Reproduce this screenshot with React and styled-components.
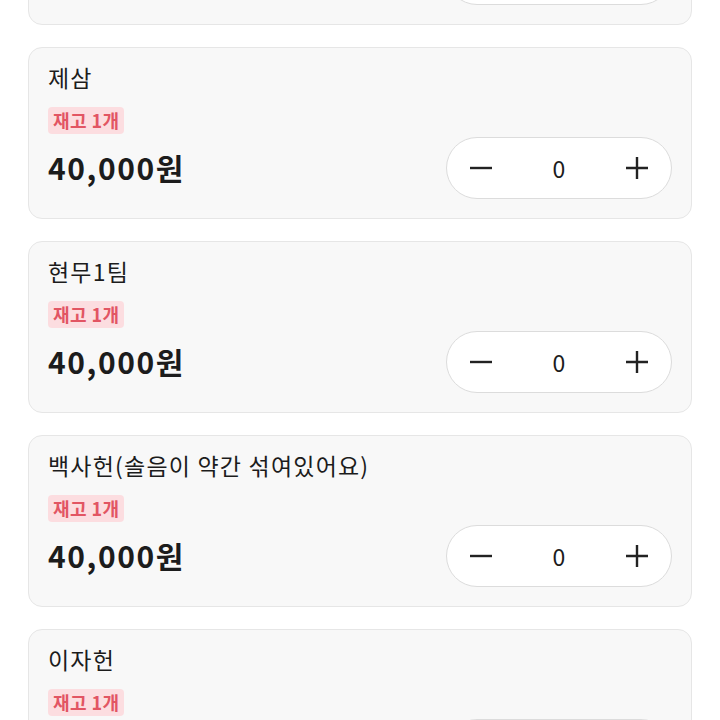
import React, { useState } from 'react';
import styled, { createGlobalStyle } from 'styled-components';

const GlobalStyle = createGlobalStyle`
  body {
    margin: 0;
    background: #ffffff;
    font-family: "Noto Sans CJK KR", "Noto Sans", sans-serif;
    color: #1f1f1f;
  }
`;

const items = [
  { name: '이름', stock: 1, price: 40000 },
  { name: '제삼', stock: 1, price: 40000 },
  { name: '현무1팀', stock: 1, price: 40000 },
  { name: '백사헌(솔음이 약간 섞여있어요)', stock: 1, price: 40000 },
  { name: '이자헌', stock: 1, price: 40000 },
];

function Stepper() {
  const [count, setCount] = useState(0);
  return (
    <StepperBox>
      <StepButton onClick={() => setCount(Math.max(0, count - 1))} aria-label="minus">
        <svg width="24" height="24" viewBox="0 0 24 24">
          <path d="M1 12h22" stroke="#222" strokeWidth="2.4" />
        </svg>
      </StepButton>
      <Count>{count}</Count>
      <StepButton onClick={() => setCount(count + 1)} aria-label="plus">
        <svg width="24" height="24" viewBox="0 0 24 24">
          <path d="M1 12h22M12 1v22" stroke="#222" strokeWidth="2.4" />
        </svg>
      </StepButton>
    </StepperBox>
  );
}

function ItemCard({ item }) {
  return (
    <Card>
      <Info>
        <Name>{item.name}</Name>
        <Badge>재고 {item.stock}개</Badge>
        <Price>{item.price.toLocaleString('ko-KR')}원</Price>
      </Info>
      <Stepper />
    </Card>
  );
}

export default function App() {
  return (
    <>
      <GlobalStyle />
      <Viewport>
        <List>
          {items.map((item, i) => (
            <ItemCard key={i} item={item} />
          ))}
        </List>
      </Viewport>
    </>
  );
}

const Viewport = styled.div`
  height: 720px;
  overflow: hidden;
`;

const List = styled.div`
  display: flex;
  flex-direction: column;
  gap: 22px;
  padding: 0 28px;
  margin-top: -147px;
`;

const Card = styled.div`
  flex-shrink: 0;
  box-sizing: border-box;
  height: 172px;
  display: flex;
  justify-content: space-between;
  align-items: flex-end;
  padding: 14px 19px 19px 19px;
  background: #f8f8f8;
  border: 1px solid #e6e6e6;
  border-radius: 14px;
`;

const Info = styled.div`
  align-self: flex-start;
  display: flex;
  flex-direction: column;
  align-items: flex-start;
`;

const Name = styled.div`
  font-size: 23px;
  line-height: 30px;
  letter-spacing: 1.2px;
  color: #1c1c1c;
`;

const Badge = styled.span`
  margin-top: 15px;
  height: 27px;
  line-height: 27px;
  padding: 0 5px;
  border-radius: 4px;
  background: #fcdde0;
  color: #e25563;
  font-size: 18px;
  letter-spacing: 0.4px;
  font-weight: 700;
`;

const Price = styled.div`
  margin-top: 15px;
  font-size: 30px;
  line-height: 36px;
  letter-spacing: 1.6px;
  font-weight: 700;
  color: #1c1c1c;
`;

const StepperBox = styled.div`
  box-sizing: border-box;
  width: 226px;
  height: 62px;
  display: flex;
  align-items: center;
  justify-content: space-between;
  padding: 0 22px;
  background: #ffffff;
  border: 1px solid #dcdcdc;
  border-radius: 31px;
`;

const StepButton = styled.button`
  border: none;
  background: none;
  padding: 0;
  width: 24px;
  height: 24px;
  display: flex;
  cursor: pointer;
`;

const Count = styled.span`
  font-size: 23px;
  color: #1c1c1c;
`;
